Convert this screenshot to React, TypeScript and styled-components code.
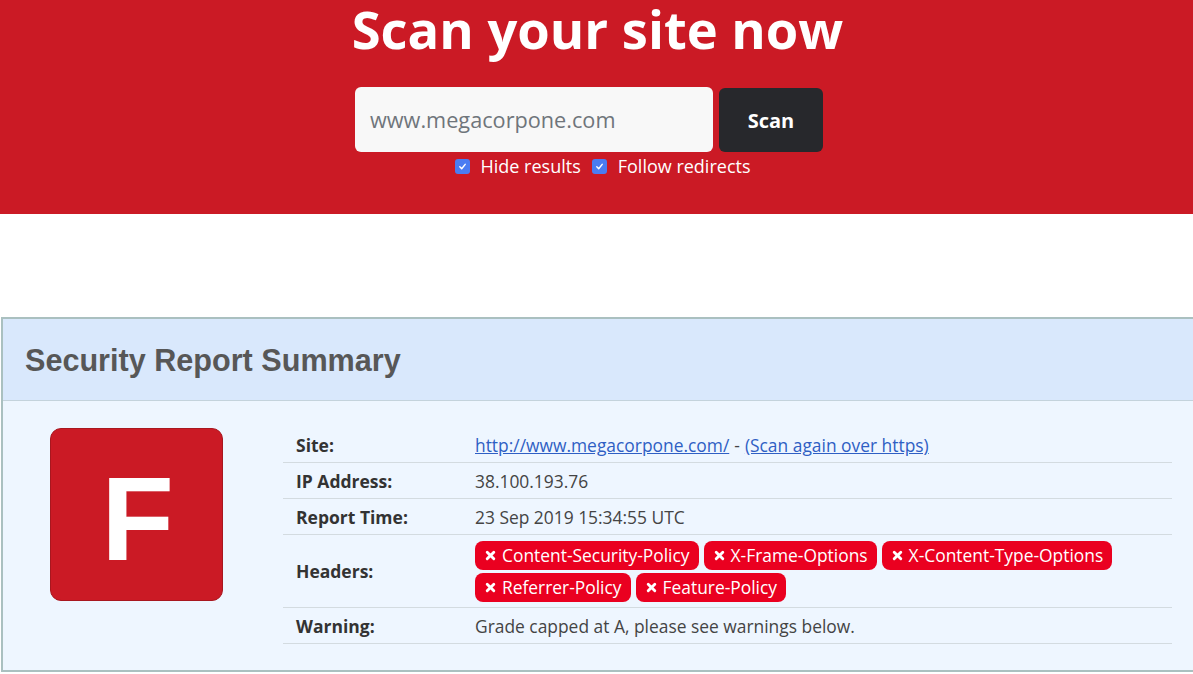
import React from "react";
import styled, { createGlobalStyle } from "styled-components";

const Global = createGlobalStyle`
  html, body { margin: 0; padding: 0; background: #ffffff; overflow: hidden; }
  body { font-family: "Open Sans", "Noto Sans", sans-serif; }
  * { box-sizing: border-box; }
`;

const Hero = styled.section`
  background: #cb1a25;
  height: 214px;
  display: flex;
  flex-direction: column;
  align-items: center;
`;

const Title = styled.h1`
  margin: 0 0 0 2px;
  font-family: "Open Sans", sans-serif;
  font-weight: 700;
  font-size: 52.5px;
  line-height: 58px;
  color: #ffffff;
`;

const Form = styled.div`
  margin-top: 29px;
  margin-right: 15px;
  display: flex;
  gap: 6px;
  align-items: flex-start;
`;

const Input = styled.div`
  width: 358px;
  height: 65px;
  background: #f8f8f8;
  border-radius: 6px;
  display: flex;
  align-items: center;
  padding-left: 15px;
  font-size: 21.7px;
  color: #6f757b;
`;

const ScanButton = styled.button`
  width: 104px;
  height: 64px;
  margin-top: 1px;
  border: none;
  border-radius: 6px;
  background: #27282c;
  color: #ffffff;
  font-family: "Open Sans", sans-serif;
  font-weight: 700;
  font-size: 20px;
`;

const Options = styled.div`
  margin-top: 2px;
  margin-left: 12px;
  display: flex;
  align-items: center;
  gap: 11px;
  height: 24px;
`;

const Option = styled.label`
  display: flex;
  align-items: center;
  gap: 11px;
  color: #ffffff;
  font-size: 18px;
`;

const Box = styled.span`
  width: 15px;
  height: 15px;
  border-radius: 3px;
  background: #4a7cf2;
  display: inline-flex;
  align-items: center;
  justify-content: center;
`;

const Check = () => (
  <Box>
    <svg width="9" height="9" viewBox="0 0 10 10">
      <path d="M2 5.4 L4.1 7.5 L8 2.6" stroke="#fff" strokeWidth="1.6" fill="none" strokeLinecap="round" strokeLinejoin="round" />
    </svg>
  </Box>
);

const Spacer = styled.div`
  height: 103px;
`;

const Panel = styled.section`
  margin-left: 1px;
  width: 1230px;
  border: 2px solid #aac0c0;
  background: #eef6ff;
`;

const PanelHeader = styled.header`
  height: 82px;
  background: #d9e8fc;
  border-bottom: 1px solid #c4d3dc;
  display: flex;
  align-items: center;
  padding-left: 22px;
  padding-top: 1px;
`;

const PanelTitle = styled.h2`
  margin: 0;
  font-family: "Liberation Sans", Arial, sans-serif;
  font-weight: 700;
  font-size: 30.6px;
  color: #575757;
`;

const PanelBody = styled.div`
  display: flex;
  padding: 26px 0 26px 47px;
`;

const Grade = styled.div`
  width: 173px;
  height: 173px;
  margin-top: 1px;
  flex: none;
  background: #cb1a25;
  border: 1px solid #a8171f;
  border-radius: 11px;
  display: flex;
  align-items: center;
  justify-content: center;
  color: #ffffff;
  font-family: "Liberation Sans", Arial, sans-serif;
  font-weight: 700;
  font-size: 119px;
  line-height: 1;
  padding-top: 8px;
  padding-left: 2px;
`;

const Table = styled.div`
  margin-left: 60px;
  width: 889px;
  display: grid;
  grid-template-columns: 192px 1fr;
`;

const Label = styled.div<{ $tall?: boolean }>`
  height: ${(p) => (p.$tall ? 73 : 36)}px;
  border-bottom: 1px solid #d3dbe0;
  display: flex;
  align-items: center;
  padding-left: 13px;
  font-weight: 700;
  font-size: 17.5px;
  color: #333;
`;

const Value = styled.div<{ $tall?: boolean }>`
  height: ${(p) => (p.$tall ? 73 : 36)}px;
  border-bottom: 1px solid #d3dbe0;
  display: flex;
  align-items: center;
  font-size: 17.4px;
  color: #444;
`;

const Link = styled.a`
  color: #2f5fc4;
  text-decoration: underline;
  margin: 0 5px 0 0;
`;

const Sep = styled.span`
  margin-right: 5px;
`;

const Badges = styled.div`
  display: flex;
  flex-wrap: wrap;
  gap: 3px 5px;
  width: 680px;
`;

const Badge = styled.span`
  height: 29px;
  display: inline-flex;
  align-items: center;
  gap: 6px;
  padding: 0 9px 0 10px;
  background: #ea0020;
  color: #fff;
  border-radius: 8px;
  font-size: 17.4px;
`;

const XIcon = () => (
  <svg width="11" height="11" viewBox="0 0 10 10">
    <path d="M2 2 L8 8 M8 2 L2 8" stroke="#fff" strokeWidth="2.6" strokeLinecap="round" />
  </svg>
);

const headers = [
  "Content-Security-Policy",
  "X-Frame-Options",
  "X-Content-Type-Options",
  "Referrer-Policy",
  "Feature-Policy",
];

export default function App() {
  return (
    <>
      <Global />
      <Hero>
        <Title>Scan your site now</Title>
        <Form>
          <Input>www.megacorpone.com</Input>
          <ScanButton>Scan</ScanButton>
        </Form>
        <Options>
          <Option>
            <Check />
            Hide results
          </Option>
          <Option>
            <Check />
            Follow redirects
          </Option>
        </Options>
      </Hero>
      <Spacer />
      <Panel>
        <PanelHeader>
          <PanelTitle>Security Report Summary</PanelTitle>
        </PanelHeader>
        <PanelBody>
          <Grade>F</Grade>
          <Table>
            <Label>Site:</Label>
            <Value>
              <Link href="#">http://www.megacorpone.com/</Link>
              <Sep>-</Sep>
              <Link href="#">(Scan again over https)</Link>
            </Value>
            <Label>IP Address:</Label>
            <Value>38.100.193.76</Value>
            <Label>Report Time:</Label>
            <Value>23 Sep 2019 15:34:55 UTC</Value>
            <Label $tall>Headers:</Label>
            <Value $tall>
              <Badges>
                {headers.map((h) => (
                  <Badge key={h}>
                    <XIcon />
                    {h}
                  </Badge>
                ))}
              </Badges>
            </Value>
            <Label>Warning:</Label>
            <Value>Grade capped at A, please see warnings below.</Value>
          </Table>
        </PanelBody>
      </Panel>
    </>
  );
}
